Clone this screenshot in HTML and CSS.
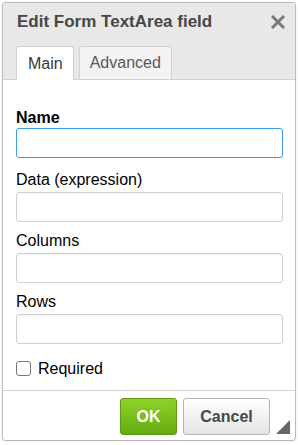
FILE: index.html
```html
<!DOCTYPE html>
<html>
<head>
    <meta charset="UTF-8">
    <title>Edit Form TextArea field</title>
    <link rel="stylesheet" href="styles.css">
</head>
<body>
    <div class="dialog">
        <div class="dialog-head">
            <div class="title-row">
                <span class="title">Edit Form TextArea field</span>
                <span class="close">
                    <svg width="14" height="14" viewBox="0 0 14 14">
                        <path d="M2 2 L12 12 M12 2 L2 12" stroke="#7a7a7a" stroke-width="3" stroke-linecap="square"/>
                    </svg>
                </span>
            </div>
            <div class="tabs">
                <div class="tab tab-active">Main</div>
                <div class="tab">Advanced</div>
            </div>
        </div>

        <div class="dialog-body">
            <div class="field field-first">
                <label class="label-strong">Name</label>
                <input type="text" class="input input-focus">
            </div>
            <div class="field">
                <label>Data (expression)</label>
                <input type="text" class="input">
            </div>
            <div class="field">
                <label>Columns</label>
                <input type="text" class="input">
            </div>
            <div class="field">
                <label>Rows</label>
                <input type="text" class="input">
            </div>
            <div class="check-row">
                <span class="checkbox"></span>
                <span>Required</span>
            </div>
        </div>

        <div class="dialog-foot">
            <button class="btn btn-ok">OK</button>
            <button class="btn btn-cancel">Cancel</button>
            <span class="resizer"></span>
        </div>
    </div>
</body>
</html>
```

FILE: styles.css
```css
body {
    margin: 0;
    padding: 2px;
    background: #fff;
    font-family: "Liberation Sans", Arial, sans-serif;
    color: #000;
}
.dialog {
    width: 294px;
    height: 439px;
    border: 1px solid #bcbcbc;
    border-radius: 3px;
    box-sizing: border-box;
    display: flex;
    flex-direction: column;
    overflow: hidden;
    box-shadow: 0 0 3px rgba(0,0,0,0.1);
}
.dialog-head {
    background: #e8e8e8;
    border-bottom: 1px solid #d1d1d1;
    padding: 0 0 0 13px;
}
.title-row {
    display: flex;
    align-items: center;
    justify-content: space-between;
    height: 37px;
    padding-right: 10px;
}
.title {
    font-size: 17px;
    font-weight: bold;
    color: #474747;
    padding-left: 1px;
}
.close {
    display: flex;
    width: 14px;
    height: 14px;
}
.tabs {
    display: flex;
    gap: 5px;
    margin-top: 6px;
    margin-bottom: -1px;
}
.tab {
    height: 33px;
    padding: 0 10px;
    border: 1px solid #d1d1d1;
    border-bottom: none;
    border-radius: 3px 3px 0 0;
    background: #f3f3f3;
    color: #595959;
    font-size: 16px;
    display: flex;
    align-items: center;
    box-sizing: border-box;
}
.tab-active {
    background: #fff;
    color: #383838;
    height: 34px;
    padding: 0 10px 0 11px;
}
.dialog-body {
    flex: 1;
    padding: 28px 12px 0 13px;
    display: flex;
    flex-direction: column;
    gap: 9px;
}
.field {
    display: flex;
    flex-direction: column;
    gap: 3px;
}
.field-first {
    gap: 1px;
    margin-bottom: 3px;
}
.field label {
    font-size: 16px;
    color: #000;
    line-height: 19px;
}
.field .label-strong {
    font-weight: bold;
}
.input {
    height: 30px;
    border: 1px solid #d1d1d1;
    border-radius: 3px;
    box-sizing: border-box;
    margin: 0;
    padding: 4px 6px;
    background: #fff;
    box-shadow: inset 0 1px 2px rgba(0,0,0,0.05);
}
.input-focus {
    border-color: #3a9cf0;
    box-shadow: none;
    outline: none;
}
.check-row {
    display: flex;
    align-items: center;
    gap: 7px;
    font-size: 16px;
    line-height: 19px;
    margin-top: 6px;
}
.checkbox {
    width: 15px;
    height: 15px;
    border: 1px solid #767676;
    border-radius: 3px;
    background: #fff;
    box-sizing: border-box;
}
.dialog-foot {
    position: relative;
    border-top: 1px solid #d1d1d1;
    height: 50px;
    box-sizing: border-box;
    display: flex;
    justify-content: flex-end;
    align-items: flex-start;
    gap: 6px;
    padding: 7px 25px 0 0;
}
.btn {
    height: 37px;
    border-radius: 3px;
    font-family: "Liberation Sans", Arial, sans-serif;
    font-size: 16px;
    font-weight: bold;
    box-sizing: border-box;
}
.btn-ok {
    width: 57px;
    color: #fff;
    border: 1px solid #5c9a14;
    background: linear-gradient(#8ed22a, #64ab10);
}
.btn-cancel {
    width: 87px;
    color: #474747;
    border: 1px solid #b6b6b6;
    background: linear-gradient(#fff, #e4e4e4);
}
.resizer {
    position: absolute;
    right: 5px;
    bottom: 6px;
    width: 0;
    height: 0;
    border-left: 14px solid transparent;
    border-bottom: 14px solid #666;
}
```
